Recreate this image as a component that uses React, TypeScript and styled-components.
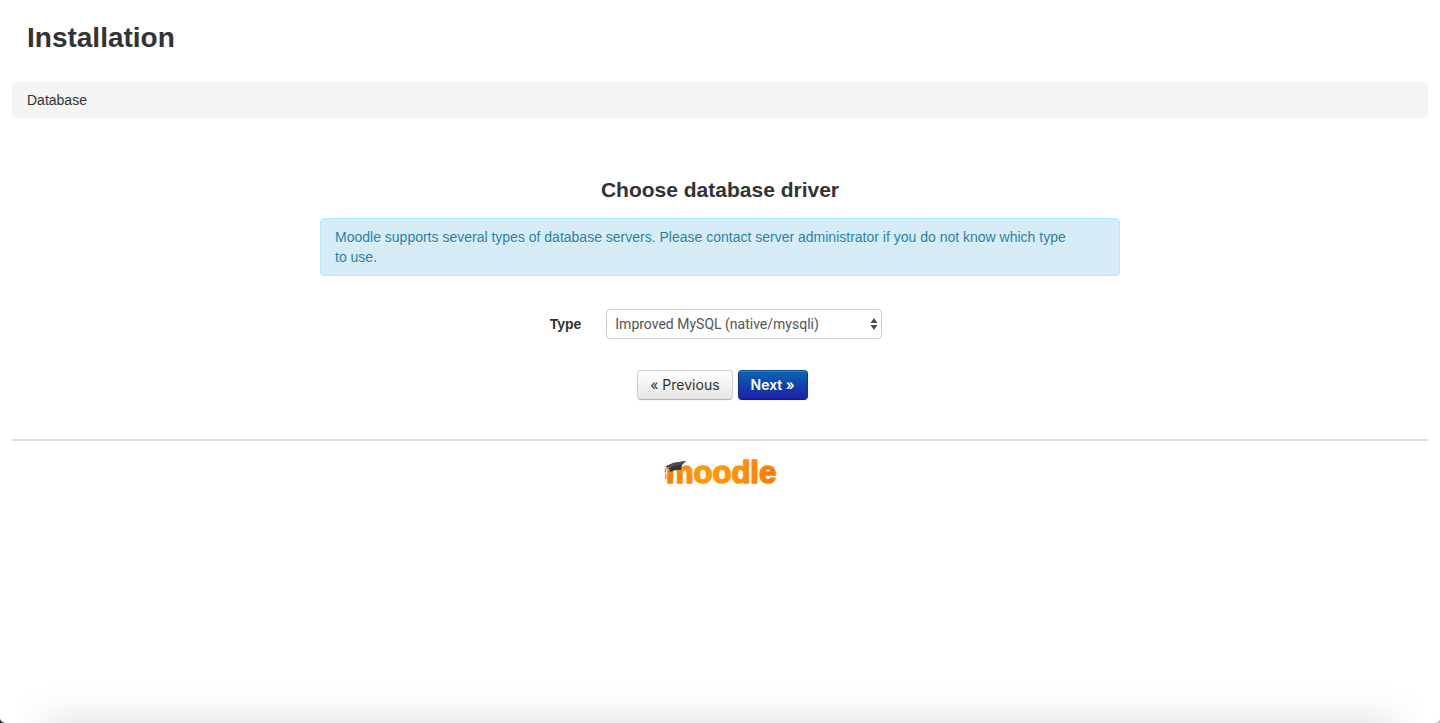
import React from "react";
import styled, { createGlobalStyle, css } from "styled-components";

const GlobalStyle = createGlobalStyle`
  *, *::before, *::after { box-sizing: border-box; }
  body {
    margin: 0;
    background: #fff;
    color: #333;
    font: 14px/20px "Liberation Sans", Arial, sans-serif;
  }
`;

const Page = styled.div`
  position: relative;
  display: flex;
  flex-direction: column;
  min-height: 100vh;
  padding: 0 12px;
`;

const Title = styled.h1`
  margin: 0;
  padding: 18px 15px 24px;
  font-size: 28px;
  line-height: 40px;
`;

const Breadcrumb = styled.nav`
  padding: 8px 15px;
  border-radius: 4px;
  background: #f5f5f5;
`;

const Content = styled.main`
  display: flex;
  flex-direction: column;
  align-items: center;
  padding: 52px 0 39px;
`;

const Heading = styled.h2`
  margin: 0 0 8px;
  font-size: 21px;
  line-height: 40px;
`;

const Notice = styled.p`
  width: 100%;
  max-width: 800px;
  margin: 0 0 33px;
  padding: 8px 42px 8px 14px;
  border: 1px solid #b0ebf3;
  border-radius: 4px;
  background: #d6edf8;
  color: #1f7fae;
  text-shadow: 0 1px 0 rgba(255, 255, 255, 0.5);
`;

const Form = styled.form`
  display: flex;
  flex-direction: column;
  align-items: center;
  gap: 31px;
`;

const Field = styled.div`
  display: flex;
  align-items: center;
  gap: 25px;
  padding-right: 8px;
`;

const Label = styled.label`
  font-weight: bold;
`;

const SelectWrap = styled.div`
  position: relative;
  width: 276px;
`;

const Select = styled.select`
  appearance: none;
  display: block;
  width: 100%;
  height: 30px;
  padding: 0 24px 0 8px;
  border: 1px solid #ccc;
  border-radius: 4px;
  background: #fff;
  color: #555;
  font: 14px/20px Roboto, sans-serif;
`;

const Arrows = styled.svg`
  position: absolute;
  top: 9px;
  right: 4px;
  pointer-events: none;
`;

const Actions = styled.div`
  display: flex;
  gap: 5px;
  padding-left: 5px;
`;

const Button = styled.button<{ $primary?: boolean }>`
  height: 30px;
  padding: 0 12px;
  border: 1px solid #d0d0d0;
  border-bottom-color: #b3b3b3;
  border-radius: 4px;
  background: linear-gradient(#fff, #e6e6e6);
  box-shadow: inset 0 1px 0 rgba(255, 255, 255, 0.2), 0 1px 2px rgba(0, 0, 0, 0.05);
  color: #333;
  font: 14px/20px Inter, sans-serif;
  ${(p) =>
    p.$primary &&
    css`
      border-color: #0b4a9d #1d2d9d #17178a;
      background: linear-gradient(#0567b0, #1f1fa8);
      color: #fff;
      font-weight: 600;
    `}
`;

const Footer = styled.footer`
  display: flex;
  justify-content: center;
  padding-top: 8px;
  border-top: 2px solid #ddd;
`;

const LogoLink = styled.a`
  display: block;
  height: 44px;
`;

const Wordmark = styled.text`
  font: bold 31px "Liberation Sans", Arial, sans-serif;
`;

const EdgeShade = styled.div`
  position: absolute;
  right: 0;
  bottom: 0;
  left: 0;
  height: 40px;
  background: linear-gradient(rgba(0, 0, 0, 0), rgba(0, 0, 0, 0.02) 50%, rgba(0, 0, 0, 0.07));
  mask-image: linear-gradient(to right, transparent 14px, #000 74px, #000 calc(100% - 74px), transparent calc(100% - 14px));
  pointer-events: none;
`;

const Corner = styled.svg<{ $side: "left" | "right" }>`
  position: absolute;
  bottom: 0;
  ${(p) => p.$side}: 0;
`;

function Logo() {
  return (
    <svg width="122" height="44" viewBox="-4 -2 122 44" role="img" aria-label="moodle">
      <defs>
        <linearGradient id="orange" gradientUnits="userSpaceOnUse" x1="4" x2="112" y1="0" y2="0">
          <stop offset="0" stopColor="#f77f10" />
          <stop offset="0.35" stopColor="#ff9a05" />
          <stop offset="0.7" stopColor="#ff9004" />
          <stop offset="1" stopColor="#ff7a00" />
        </linearGradient>
      </defs>
      <Wordmark x="3" y="32" fill="url(#orange)" stroke="url(#orange)" strokeWidth="1.6">
        moodle
      </Wordmark>
      <path d="M2 16 10 12 23 10 19 14 18 19 Q13 18 7 21 L6 16Z" fill="#353535" />
      <path d="M2 16 10 12 23 10 17 14 8 16Z" fill="#4c4c4c" />
      <path d="M8 16 3 17 2 21" fill="none" stroke="#777" />
      <path d="M2 21 3 21 4 28 2 28Z" fill="#f3a064" />
    </svg>
  );
}

export default function App() {
  return (
    <>
      <GlobalStyle />
      <Page>
        <Title>Installation</Title>
        <Breadcrumb aria-label="Breadcrumb">Database</Breadcrumb>
        <Content>
          <Heading>Choose database driver</Heading>
          <Notice>
            Moodle supports several types of database servers. Please contact server administrator if you do not know
            which type to use.
          </Notice>
          <Form onSubmit={(e) => e.preventDefault()}>
            <Field>
              <Label htmlFor="dbtype">Type</Label>
              <SelectWrap>
                <Select id="dbtype">
                  <option>Improved MySQL (native/mysqli)</option>
                </Select>
                <Arrows width="8" height="12" viewBox="0 0 8 12" aria-hidden="true">
                  <path d="M4 0 7.5 5H.5ZM.5 7H7.5L4 12Z" fill="#4d4d4d" />
                </Arrows>
              </SelectWrap>
            </Field>
            <Actions>
              <Button type="button">« Previous</Button>
              <Button type="submit" $primary>
                Next »
              </Button>
            </Actions>
          </Form>
        </Content>
        <Footer>
          <LogoLink href="#">
            <Logo />
          </LogoLink>
        </Footer>
        <EdgeShade />
        <Corner $side="left" width="5" height="5" viewBox="0 0 5 5" aria-hidden="true">
          <path d="M0 0Q0 4 5 5H0Z" fill="#222" />
        </Corner>
        <Corner $side="right" width="5" height="5" viewBox="0 0 5 5" aria-hidden="true">
          <path d="M5 0Q5 4 0 5H5Z" fill="#bbb" />
        </Corner>
      </Page>
    </>
  );
}
